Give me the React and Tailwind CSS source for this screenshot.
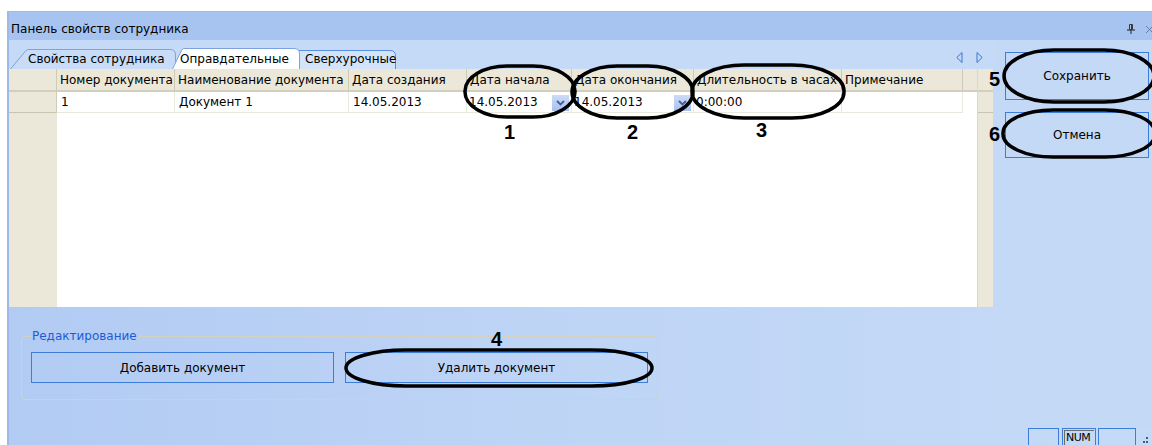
import React from "react";

const cols = [
  { w: "w-[118px]", h: "Номер документа", d: "1" },
  { w: "w-[174px]", h: "Наименование документа", d: "Документ 1" },
  { w: "w-[118px]", h: "Дата создания", d: "14.05.2013" },
  { w: "w-[105px]", h: "Дата начала", d: "14.05.2013", drop: true },
  { w: "w-[122px]", h: "Дата окончания", d: "14.05.2013", drop: true },
  { w: "w-[148px]", h: "Длительность в часах", d: "0:00:00" },
  { w: "w-[121px]", h: "Примечание", d: "" },
];

function DropBtn() {
  return (
    <div className="absolute right-[2px] top-[3px] w-[17px] h-[16px] bg-gradient-to-b from-[#cddcf6] to-[#a9c0ef] flex items-center justify-center">
      <svg width="9" height="6" viewBox="0 0 9 6">
        <path d="M1 1 L4.5 4.5 L8 1" fill="none" stroke="#3d5ea8" strokeWidth="1.8" />
      </svg>
    </div>
  );
}

function Tab({ w, vw, ml, path, fill, stroke, pl, label, z }) {
  return (
    <div className={`relative h-[21px] ${w} ${ml} ${z}`}>
      <svg className="absolute inset-0" width="100%" height="21" viewBox={`0 0 ${vw} 21`}>
        <path d={path} fill={fill} stroke={stroke} strokeWidth="1" />
      </svg>
      <span className={`relative block ${pl} pt-[4px] whitespace-nowrap leading-[14px]`}>{label}</span>
    </div>
  );
}

export default function App() {
  return (
    <div className="relative w-[1152px] h-[445px] overflow-hidden bg-white font-['DejaVu_Sans',sans-serif] text-[12px] text-black">
      <div className="h-[11px]" />
      <div className="ml-[7px] h-[434px] flex flex-col border-l-2 border-l-[#9cb9e8] border-t border-t-[#a9bbd8]">
        {/* title bar */}
        <div className="h-[28px] shrink-0 bg-[#a7c4f0] flex items-center pt-[6px] pl-[2px]">
          <span className="leading-[14px]">Панель свойств сотрудника</span>
          <div className="ml-auto flex items-center gap-[10px] mr-[-2px]">
            <svg width="8" height="10" viewBox="0 0 8 10">
              <path d="M2.5 0.5 H5.5 V5.5 H2.5 Z" fill="none" stroke="#3a3a3a" strokeWidth="1" />
              <path d="M4.5 1 V5" stroke="#3a3a3a" strokeWidth="1" />
              <path d="M0 6 H8" stroke="#3a3a3a" strokeWidth="1.2" />
              <path d="M4 6 V10" stroke="#3a3a3a" strokeWidth="1.2" />
            </svg>
            <svg width="9" height="9" viewBox="0 0 9 9">
              <path d="M1 1 L8 8 M8 1 L1 8" stroke="#6a7fa8" strokeWidth="1" />
            </svg>
          </div>
        </div>
        {/* body */}
        <div className="flex-1 flex flex-col bg-gradient-to-r from-[#b2cbf3] via-[#bfd5f6] to-[#c5daf7]">
          <div className="flex h-[388px]">
            {/* left column */}
            <div className="w-[985px] flex flex-col">
              <div className="bg-[#c5daf6] pt-[8px] flex items-start">
                <div className="flex items-end h-[21px] ml-[1px]">
                  <Tab
                    w="w-[166px]"
                    vw={166}
                    ml=""
                    z="z-0"
                    path="M0.5 21 L16 2.5 Q17 1.5 19 1.5 L160 1.5 Q165 1.5 165.5 6 L165.5 21"
                    fill="#c8dcf7"
                    stroke="#7ea3dc"
                    pl="pl-[18px]"
                    label="Свойства сотрудника"
                  />
                  <Tab
                    w="w-[128px]"
                    vw={128}
                    ml="ml-[-4px]"
                    z="z-10"
                    path="M0.5 21 L10 1.5 Q11 0.5 13 0.5 L122 0.5 Q127.5 0.5 127.5 6 L127.5 21"
                    fill="#ffffff"
                    stroke="#7ea3dc"
                    pl="pl-[8px]"
                    label="Оправдательные"
                  />
                  <Tab
                    w="w-[98px]"
                    vw={98}
                    ml="ml-[-2px]"
                    z="z-0"
                    path="M0.5 21 L0.5 4 Q0.5 2.5 2 2.5 L92 2.5 Q97.5 2.5 97.5 8 L97.5 21"
                    fill="#d3e3fa"
                    stroke="#5a8ee0"
                    pl="pl-[7px]"
                    label="Сверхурочные"
                  />
                </div>
                <div className="ml-auto mr-[11px] mt-[4px] flex gap-[13px]">
                  <svg width="7" height="11" viewBox="0 0 7 11">
                    <path d="M6 0.5 L0.8 5.5 L6 10.5 Z" fill="none" stroke="#3a72d4" strokeWidth="1" />
                  </svg>
                  <svg width="7" height="11" viewBox="0 0 7 11">
                    <path d="M1 0.5 L6.2 5.5 L1 10.5 Z" fill="none" stroke="#3a72d4" strokeWidth="1" />
                  </svg>
                </div>
              </div>
              {/* grid */}
              <div className="flex h-[238px] w-[984px]">
                <div className="w-[48px] bg-[#ebe8d9] flex flex-col">
                  <div className="h-[23px] border-b-2 border-b-[#d3cfbf] border-r border-r-[#cfcbb9]" />
                  <div className="h-[21px] border-b border-b-[#c9c5b3] border-r border-r-[#cfcbb9]" />
                </div>
                <div className="w-[920px] bg-white flex flex-col">
                  <div className="flex h-[23px] bg-[#ebe8d9] border-b-2 border-b-[#d3cfbf]">
                    {cols.map((c, i) => (
                      <div
                        key={i}
                        className={`${c.w} shrink-0 border-r border-r-[#cdc9b7] px-[3px] flex items-center overflow-hidden whitespace-nowrap leading-[14px]`}
                      >
                        {c.h}
                      </div>
                    ))}
                    <div className="flex-1" />
                  </div>
                  <div className="flex h-[21px]">
                    {cols.map((c, i) => (
                      <div
                        key={i}
                        className={`relative ${c.w} shrink-0 border-r border-b border-[#ebe8dc] ${c.drop || i === 5 ? "px-[2px]" : "px-[4px]"} flex items-center overflow-hidden whitespace-nowrap leading-[14px]`}
                      >
                        {c.d}
                        {c.drop && <DropBtn />}
                      </div>
                    ))}
                    <div className="flex-1" />
                  </div>
                </div>
                <div className="w-[16px] bg-[#ebe8d9] flex flex-col border-l border-l-[#dcd8c8]">
                  <div className="h-[23px] border-b-2 border-b-[#d3cfbf]" />
                  <div className="h-[21px] border-b border-b-[#c9c5b3]" />
                </div>
              </div>
              {/* group box */}
              <fieldset className="ml-[12px] mt-[22px] w-[637px] h-[71px] border border-[#d4d1c1] rounded-[4px] px-[9px]">
                <legend className="px-[1px] text-[#1d5bd6] leading-[14px]">Редактирование</legend>
                <div className="flex gap-[11px] mt-[9px]">
                  <button className="w-[303px] h-[31px] border border-[#3c7ddc] flex items-center justify-center leading-[14px]">
                    Добавить документ
                  </button>
                  <button className="w-[303px] h-[31px] border border-[#3c7ddc] flex items-center justify-center leading-[14px]">
                    Удалить документ
                  </button>
                </div>
              </fieldset>
            </div>
            {/* right column */}
            <div className="flex-1 bg-[#c4d9f6] pt-[12px] pl-[11px] flex flex-col gap-[12px]">
              <button className="w-[144px] h-[48px] border border-[#3c7ddc] flex items-center justify-center leading-[14px]">
                Сохранить
              </button>
              <button className="w-[144px] h-[46px] border border-[#3c7ddc] flex items-center justify-center leading-[14px]">
                Отмена
              </button>
            </div>
          </div>
          {/* status row */}
          <div className="flex-1 flex items-start justify-end pr-[4px]">
            <div className="w-[31px] h-[20px] border border-[#3c7ddc]" />
            <div className="ml-[3px] w-[34px] h-[20px] border border-[#3c7ddc] p-[1px]">
              <div className="h-full border-l border-t border-[#6b6b6b] text-[11px] leading-[14px] pl-[1px] tracking-[-0.5px]">NUM</div>
            </div>
            <div className="ml-[2px] w-[38px] h-[20px] border border-[#3c7ddc]" />
            <svg className="ml-[6px] mt-[8px]" width="6" height="9" viewBox="0 0 6 9">
              <rect x="4" y="1" width="2" height="2" fill="#3e5d8c" />
              <rect x="1" y="5" width="2" height="2" fill="#3e5d8c" />
              <rect x="4" y="5" width="2" height="2" fill="#3e5d8c" />
            </svg>
          </div>
        </div>
      </div>

      {/* annotations */}
      <svg className="absolute inset-0 pointer-events-none z-20" width="1152" height="445">
        <g fill="none" stroke="#000" strokeWidth="3.5">
          <rect x="465" y="66" width="110" height="51" rx="42" ry="25" />
          <rect x="572" y="66" width="121" height="52" rx="45" ry="26" />
          <rect x="692" y="65" width="152" height="53" rx="52" ry="26" />
          <rect x="346" y="350" width="306" height="36" rx="60" ry="18" />
          <rect x="1004" y="50" width="150" height="52" rx="50" ry="26" />
          <rect x="1003" y="110" width="152" height="47" rx="50" ry="23" />
        </g>
      </svg>
      <span className="absolute left-[504px] top-[122px] z-20 font-['Liberation_Sans',sans-serif] font-bold text-[20px] leading-[20px]">1</span>
      <span className="absolute left-[627px] top-[122px] z-20 font-['Liberation_Sans',sans-serif] font-bold text-[20px] leading-[20px]">2</span>
      <span className="absolute left-[756px] top-[120px] z-20 font-['Liberation_Sans',sans-serif] font-bold text-[20px] leading-[20px]">3</span>
      <span className="absolute left-[491px] top-[329px] z-20 font-['Liberation_Sans',sans-serif] font-bold text-[20px] leading-[20px]">4</span>
      <span className="absolute left-[989px] top-[69px] z-20 font-['Liberation_Sans',sans-serif] font-bold text-[20px] leading-[20px]">5</span>
      <span className="absolute left-[989px] top-[124px] z-20 font-['Liberation_Sans',sans-serif] font-bold text-[20px] leading-[20px]">6</span>
    </div>
  );
}
